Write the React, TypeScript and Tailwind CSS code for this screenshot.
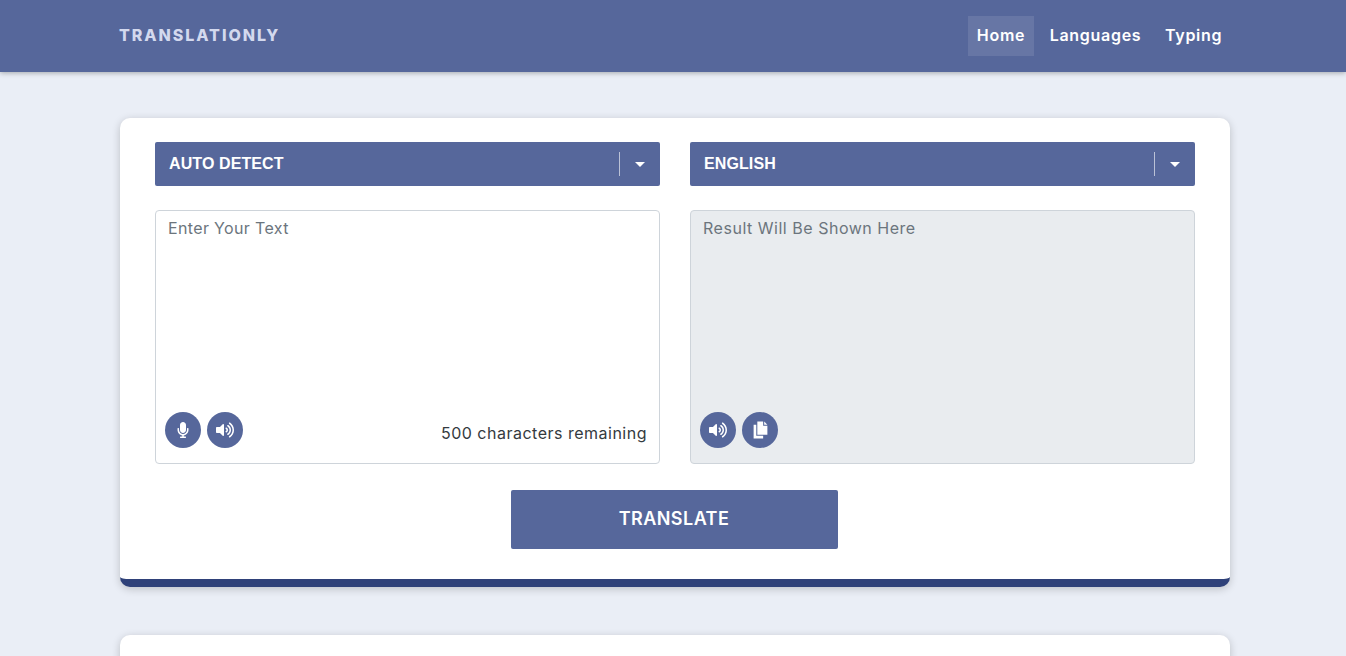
import React from "react";
import { FaMicrophone, FaVolumeUp } from "react-icons/fa";

const mont = "font-['Inter',sans-serif]";

function Round({ children }: { children: React.ReactNode }) {
  return (
    <button className="w-9 h-9 rounded-full bg-[#56679b] text-white flex items-center justify-center">
      {children}
    </button>
  );
}

function CopyIcon() {
  return (
    <svg width="17" height="18" viewBox="0 0 16 17" fill="white">
      <path d="M5 0.5h5.5v4h4v8.5H5z" />
      <path d="M11.5 0.5l3 3h-3z" />
      <path d="M1.5 3.5H4v10.5h6.5v2.5h-9z" />
    </svg>
  );
}

function Select({ label }: { label: string }) {
  return (
    <div className="h-11 bg-[#56679b] rounded-[2px] flex items-center pl-[14px] text-white font-['Liberation_Sans',sans-serif] font-bold text-base tracking-[0.1px]">
      <span className="flex-1">{label}</span>
      <span className="w-px h-6 bg-white/60" />
      <span className="w-10 flex justify-center pr-[1px]">
        <span className="w-0 h-0 border-l-[5px] border-r-[5px] border-t-[5px] border-l-transparent border-r-transparent border-t-white" />
      </span>
    </div>
  );
}

export default function App() {
  return (
    <div className={`h-[656px] overflow-hidden bg-[#eaeef6] ${mont}`}>
      <header className="h-[72px] bg-[#56679b] shadow-[0_1px_5px_rgba(0,0,0,0.3)]">
        <div className="w-[1110px] ml-[119px] h-full flex items-center justify-between">
          <div className="text-[#d3d9ee] font-extrabold text-[16px] tracking-[1.95px] -mt-[2px]">TRANSLATIONLY</div>
          <nav className="flex items-center text-white font-semibold text-[16px] tracking-[0.7px]">
            <a className="h-10 flex items-center bg-white/10 w-[66px] justify-center pb-[2px]">Home</a>
            <a className="h-10 flex items-center w-[123px] justify-center pb-[2px]">Languages</a>
            <a className="h-10 flex items-center w-[72px] pl-2 pb-[2px]">Typing</a>
          </nav>
        </div>
      </header>

      <main className="w-[1110px] ml-[120px] pt-[46px] flex flex-col gap-12">
        <section className="h-[469px] bg-white rounded-[10px] border-b-[8px] border-[#2f4179] shadow-[0_2px_8px_rgba(0,0,0,0.2)] px-[35px] pt-6 flex flex-col">
          <div className="grid grid-cols-2 gap-[30px]">
            <Select label="AUTO DETECT" />
            <Select label="ENGLISH" />
          </div>
          <div className="grid grid-cols-2 gap-[30px] mt-6">
            <div className="h-[254px] border border-[#ced4da] rounded-[4px] bg-white pl-[9px] pr-3 pt-[5px] pb-[15px] flex flex-col justify-between">
              <div className="pl-[3px] text-[16px] text-[#6c757d] tracking-[0.35px]">Enter Your Text</div>
              <div className="flex items-end justify-between">
                <div className="flex gap-[6px]">
                  <Round><FaMicrophone className="text-[16px]" /></Round>
                  <Round><FaVolumeUp className="text-[18px]" /></Round>
                </div>
                <span className="text-[#343a40] text-[16px] leading-6 mb-[3px] tracking-[0.5px]">500 characters remaining</span>
              </div>
            </div>
            <div className="h-[254px] border border-[#ced4da] rounded-[4px] bg-[#e9ecef] pl-[9px] pr-3 pt-[5px] pb-[15px] flex flex-col justify-between">
              <div className="pl-[3px] text-[16px] text-[#6c757d] tracking-[0.52px]">Result Will Be Shown Here</div>
              <div className="flex gap-[6px]">
                <Round><FaVolumeUp className="text-[18px]" /></Round>
                <Round><CopyIcon /></Round>
              </div>
            </div>
          </div>
          <button className="self-center -translate-x-[1px] mt-[26px] w-[327px] h-[59px] pb-[2px] bg-[#56679b] rounded-[2px] text-white font-semibold text-[18px] tracking-[0.45px]">
            TRANSLATE
          </button>
        </section>
        <section className="h-[300px] bg-white rounded-[10px] shadow-[0_2px_8px_rgba(0,0,0,0.2)] shrink-0" />
      </main>
    </div>
  );
}
